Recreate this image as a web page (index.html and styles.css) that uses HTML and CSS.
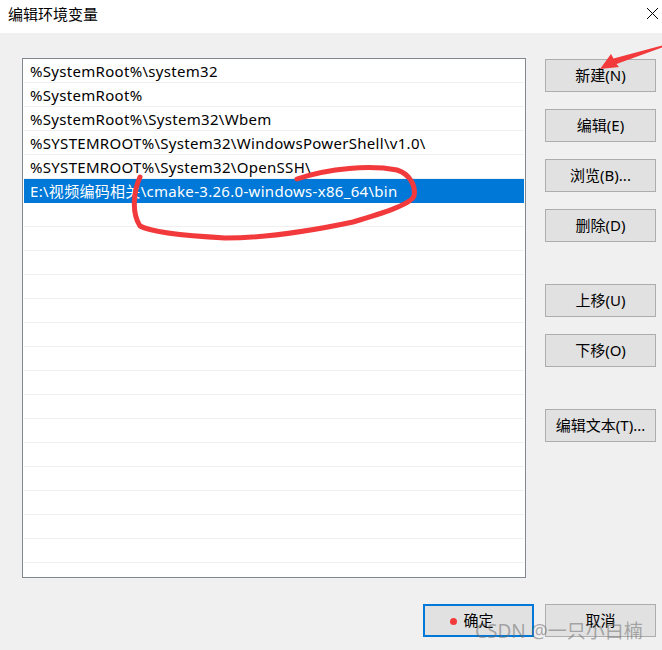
FILE: index.html
```html
<!DOCTYPE html>
<html lang="zh-CN">
<head>
<meta charset="utf-8">
<title>编辑环境变量</title>
<link rel="stylesheet" href="styles.css">
</head>
<body>
<div class="window">
  <div class="titlebar">
    <span class="title">编辑环境变量</span>
    <svg class="close" width="13" height="13" viewBox="0 0 13 13"><path d="M1 1 L12 12 M12 1 L1 12" stroke="#000" stroke-width="1" fill="none"/></svg>
  </div>
  <div class="content">
    <div class="main">
      <div class="list">
        <div class="row">%SystemRoot%\system32</div>
        <div class="row">%SystemRoot%</div>
        <div class="row">%SystemRoot%\System32\Wbem</div>
        <div class="row">%SYSTEMROOT%\System32\WindowsPowerShell\v1.0\</div>
        <div class="row">%SYSTEMROOT%\System32\OpenSSH\</div>
        <div class="row selected">E:\视频编码相关\cmake-3.26.0-windows-x86_64\bin</div>
        <div class="row"></div>
        <div class="row"></div>
        <div class="row"></div>
        <div class="row"></div>
        <div class="row"></div>
        <div class="row"></div>
        <div class="row"></div>
        <div class="row"></div>
        <div class="row"></div>
        <div class="row"></div>
        <div class="row"></div>
        <div class="row"></div>
        <div class="row"></div>
        <div class="row"></div>
        <div class="row"></div>
        <div class="row"></div>
      </div>
      <div class="side">
        <button class="btn">新建(N)</button>
        <button class="btn">编辑(E)</button>
        <button class="btn">浏览(B)...</button>
        <button class="btn">删除(D)</button>
        <button class="btn gap-big">上移(U)</button>
        <button class="btn">下移(O)</button>
        <button class="btn gap-big">编辑文本(T)...</button>
      </div>
    </div>
    <div class="footer">
      <button class="btn primary">确定</button>
      <button class="btn">取消</button>
    </div>
  </div>
  <span class="dot"></span>
  <div class="watermark">CSDN @一只小白楠</div>
  <svg class="annot" width="662" height="650" viewBox="0 0 662 650">
    <path d="M140,177 C134,190 131,212 140,226 C152,233 190,236 225,238 C270,238 320,229 353,222 C380,214 410,205 414,196 C416,186 410,174 397,170 C370,165 330,168 297,179" stroke="#f23a3c" stroke-width="5" fill="none" stroke-linecap="round" stroke-linejoin="round"/>
    <polygon points="600,69 611,54 613.5,58.5 662,45.5 662,47.5 616.5,64 619,67" fill="#f23a3c"/>
  </svg>
</div>
</body>
</html>
```
FILE: styles.css
```css
* { box-sizing: border-box; }
html, body { margin: 0; padding: 0; }
body {
  background: #f0f0f0;
  font-family: "Noto Sans", "Noto Sans CJK SC", sans-serif;
  font-size: 15px;
  color: #000;
}
.window {
  position: relative;
  width: 662px;
  height: 650px;
  overflow: hidden;
}
.titlebar {
  height: 33px;
  background: #fff;
  display: flex;
  justify-content: space-between;
  align-items: flex-start;
  padding: 4px 3px 0 8px;
}
.title {
  font-size: 15px;
  line-height: 20px;
  font-family: "Noto Sans CJK SC", sans-serif;
}
.close { margin-top: 3px; }
.content {
  padding: 25px 6px 0 22px;
}
.main {
  display: flex;
  align-items: flex-start;
}
.list {
  width: 504px;
  height: 520px;
  border: 1px solid #828790;
  background: #fff;
  padding: 0 1px;
  overflow: hidden;
  flex: none;
}
.row {
  height: 24px;
  line-height: 23px;
  border-bottom: 1px solid #efefef;
  padding: 1px 0 0 6px;
  white-space: nowrap;
  overflow: hidden;
  letter-spacing: 0.3px;
}
.row.selected {
  background: #0078d7;
  border-bottom-color: #0078d7;
  color: #fff;
}
.side {
  margin-left: 19px;
  margin-top: 1px;
  display: flex;
  flex-direction: column;
  gap: 17px;
}
.btn {
  width: 111px;
  height: 33px;
  border: 1px solid #adadad;
  background: #e1e1e1;
  font-family: "Noto Sans", "Noto Sans CJK SC", sans-serif;
  font-size: 15px;
  color: #000;
  padding: 0;
  margin: 0;
  line-height: 31px;
  text-align: center;
}
.gap-big { margin-top: 25px; }
.footer {
  margin-top: 26px;
  display: flex;
  justify-content: flex-end;
  gap: 11px;
}
.btn.primary {
  border: 2px solid #0078d7;
  line-height: 29px;
}
.dot {
  position: absolute;
  left: 450px;
  top: 618px;
  width: 7px;
  height: 7px;
  border-radius: 50%;
  background: #f33b3b;
}
.watermark {
  position: absolute;
  left: 475px;
  top: 617px;
  font-size: 19px;
  line-height: 28px;
  color: rgba(110, 110, 110, 0.55);
  white-space: nowrap;
  font-family: "Noto Sans", "Noto Sans CJK SC", sans-serif;
}
.annot {
  position: absolute;
  left: 0;
  top: 0;
  pointer-events: none;
}
```
